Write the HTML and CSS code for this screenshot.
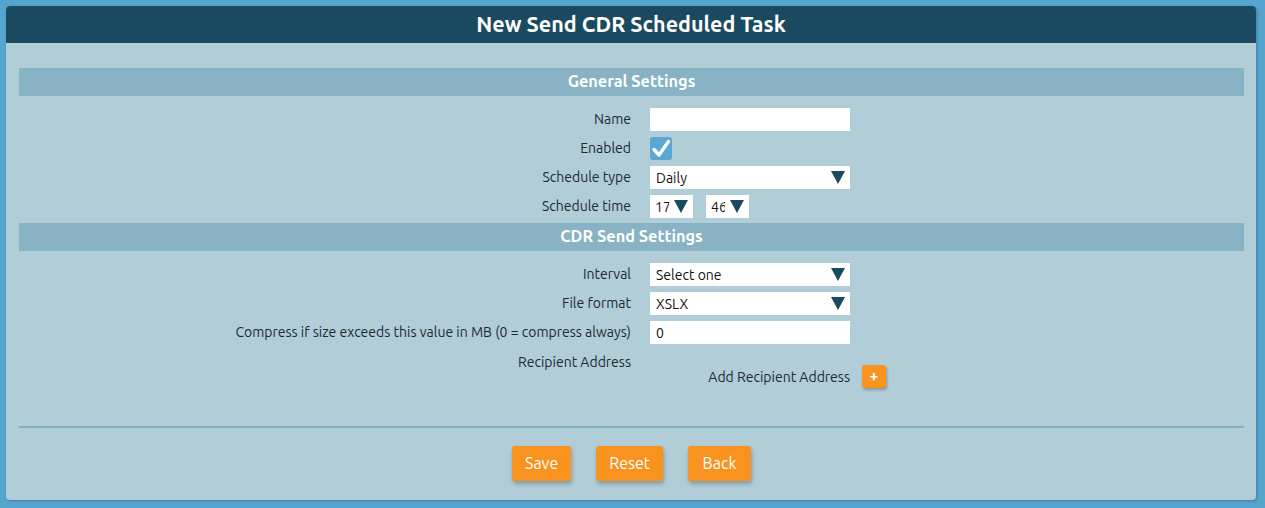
FILE: index.html
```html
<!DOCTYPE html>
<html>
<head>
<meta charset="utf-8">
<link rel="stylesheet" href="styles.css">
</head>
<body>
<div class="panel">
  <div class="panel-title">New Send CDR Scheduled Task</div>
  <div class="panel-body">
    <div class="section-bar">General Settings</div>
    <div class="form">
      <div class="row"><div class="label">Name</div><div class="field"><div class="input"></div></div></div>
      <div class="row"><div class="label">Enabled</div><div class="field">
        <div class="checkbox"><svg width="22" height="23" viewBox="0 0 22 23"><path d="M4 12.5 L9 18 L18.5 4.5" fill="none" stroke="#fff" stroke-width="3.4" stroke-linecap="round" stroke-linejoin="round"/></svg></div>
      </div></div>
      <div class="row"><div class="label">Schedule type</div><div class="field"><div class="select wide"><span>Daily</span><span class="arrow"></span></div></div></div>
      <div class="row"><div class="label">Schedule time</div><div class="field time">
        <div class="select small"><span class="clip">17</span><span class="arrow"></span></div>
        <div class="select small"><span class="clip">46</span><span class="arrow"></span></div>
      </div></div>
    </div>
    <div class="section-bar second">CDR Send Settings</div>
    <div class="form form2">
      <div class="row"><div class="label">Interval</div><div class="field"><div class="select wide"><span>Select one</span><span class="arrow"></span></div></div></div>
      <div class="row"><div class="label">File format</div><div class="field"><div class="select wide"><span>XSLX</span><span class="arrow"></span></div></div></div>
      <div class="row"><div class="label">Compress if size exceeds this value in MB (0 = compress always)</div><div class="field"><div class="input"><span>0</span></div></div></div>
      <div class="row recip"><div class="label">Recipient Address</div><div class="field"></div></div>
      <div class="add-row"><span class="add-label">Add Recipient Address</span><span class="plus">+</span></div>
    </div>
    <div class="divider"></div>
    <div class="buttons">
      <span class="btn">Save</span>
      <span class="btn">Reset</span>
      <span class="btn back">Back</span>
    </div>
  </div>
</div>
</body>
</html>
```

FILE: styles.css
```css
html, body {
  margin: 0;
  padding: 0;
}
body {
  background: #54a6cf;
  font-family: "Ubuntu", "Open Sans", "Noto Sans", sans-serif;
  color: #1c2a30;
  padding: 6px 9px 8px 6px;
  height: 508px;
  box-sizing: border-box;
}
.panel {
  background: #b0cdd8;
  border-radius: 4px;
  overflow: hidden;
  height: 494px;
  box-shadow: 1px 1px 3px rgba(0,0,0,0.25);
}
.panel-title {
  background: #1a4a60;
  color: #fff;
  font-weight: 700;
  font-size: 21.5px;
  height: 37px;
  line-height: 37px;
  text-align: center;
}
.panel-body {
  padding: 25px 12px 0 13px;
}
.section-bar {
  background: #87b3c4;
  color: #fff;
  font-weight: 700;
  font-size: 16.3px;
  height: 28px;
  line-height: 27px;
  text-align: center;
}
.form {
  padding: 12px 0 5px;
  display: flex;
  flex-direction: column;
  gap: 6px;
}
.form2 {
  padding-top: 12px;
}
.row {
  display: grid;
  grid-template-columns: 612px 1fr;
  align-items: center;
  min-height: 23px;
}
.label {
  text-align: right;
  font-size: 14px;
  line-height: 17px;
}
.field {
  padding-left: 19px;
  display: flex;
  align-items: center;
}
.input, .select {
  background: #fff;
  height: 23px;
  width: 200px;
  box-sizing: border-box;
  font-size: 14px;
  padding: 0 6px;
  display: flex;
  align-items: center;
  justify-content: space-between;
  color: #111;
}
.checkbox {
  width: 22px;
  height: 23px;
  background: #5aa8d2;
  border-radius: 3px;
}
.checkbox svg { display: block; }
.arrow {
  width: 0;
  height: 0;
  border-left: 7px solid transparent;
  border-right: 7px solid transparent;
  border-top: 13px solid #1a4a60;
  margin-right: -1px;
}
.time { gap: 13px; }
.select.small {
  width: 43px;
  padding: 0 6px 0 5px;
}
.clip {
  width: 14px;
  overflow: hidden;
  white-space: nowrap;
}
.recip {
  margin-top: 3px;
  min-height: 18px;
}
.add-row {
  display: grid;
  grid-template-columns: 831px auto;
  align-items: center;
  margin-top: -12px;
}
.add-label {
  font-size: 14px;
  text-align: right;
}
.plus {
  margin-left: 12px;
  width: 24px;
  height: 23px;
  background: #f7931e;
  color: #fff;
  font-weight: 700;
  font-size: 15px;
  line-height: 22px;
  text-align: center;
  border-radius: 3px;
  box-shadow: 1px 2px 3px rgba(0,0,0,0.25);
}
.divider {
  margin-top: 33px;
  height: 2px;
  background: #7fb0c0;
}
.buttons {
  display: flex;
  justify-content: center;
  gap: 25px;
  padding: 18px 0 0;
}
.btn {
  background: #f7931e;
  color: #fff;
  font-size: 16px;
  height: 35px;
  line-height: 35px;
  padding: 0 13px;
  border-radius: 3px;
  box-shadow: 1px 3px 4px rgba(0,0,0,0.25);
}
.btn.back {
  padding: 0 14.5px;
}
```
